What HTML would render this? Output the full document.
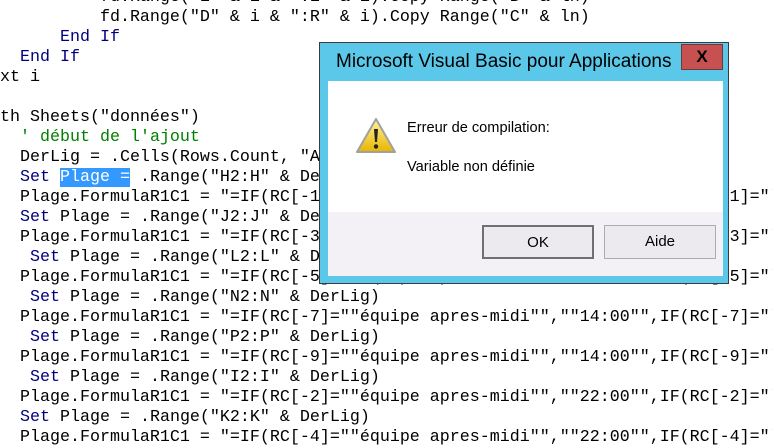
<!DOCTYPE html>
<html><head><meta charset="utf-8"><style>
*{margin:0;padding:0}
body{width:772px;height:432px;overflow:hidden;background:#fff;position:relative}
pre{position:absolute;left:0;top:-12px;font-family:"Liberation Mono",monospace;font-size:16.67px;line-height:20px;color:#000;white-space:pre}
.k{color:#00007f}.c{color:#008000}.h{background:#3399ff;color:#fff}
#dlg{position:absolute;left:319px;top:42px;width:408px;height:240px;background:#5bc8ea;border:1px solid #3c3c3c}
#title{position:absolute;left:16px;top:8px;font-family:"Liberation Sans",sans-serif;font-size:19px;color:#000}
#close{position:absolute;left:361px;top:1px;width:42px;height:26px;background:#c75050;border:1px solid #6b3a3a;box-sizing:border-box;font:bold 17px "Liberation Sans",sans-serif;text-align:center;line-height:24px;color:#000}
#white{position:absolute;left:8px;top:38px;width:395px;height:131px;background:#fff}
#gray{position:absolute;left:8px;top:169px;width:395px;height:64px;background:#f3f1f5}
.t{position:absolute;font-family:"Liberation Sans",sans-serif;font-size:14.6px;color:#000}
.b{position:absolute;top:13px;width:112px;height:34px;box-sizing:border-box;background:#eceaee;border:1px solid #acacac;font-family:"Liberation Sans",sans-serif;font-size:15px;text-align:center;line-height:32px}
</style></head><body>
<pre>          fd.Range("E" &amp; i &amp; ":E" &amp; i).Copy Range("B" &amp; ln)
          fd.Range("D" &amp; i &amp; ":R" &amp; i).Copy Range("C" &amp; ln)
      <span class="k">End If</span>
  <span class="k">End If</span>
xt i

th Sheets("données")
  <span class="c">' début de l'ajout</span>
  DerLig = .Cells(Rows.Count, "A").End(xlUp).Row
  <span class="k">Set</span> <span class="h">Plage =</span> .Range("H2:H" &amp; DerLig)
  Plage.FormulaR1C1 = "=IF(RC[-1]=""équipe apres-midi"",""14:00"",IF(RC[-1]="""
  <span class="k">Set</span> Plage = .Range("J2:J" &amp; DerLig)
  Plage.FormulaR1C1 = "=IF(RC[-3]=""équipe apres-midi"",""14:00"",IF(RC[-3]="""
   <span class="k">Set</span> Plage = .Range("L2:L" &amp; DerLig)
  Plage.FormulaR1C1 = "=IF(RC[-5]=""équipe apres-midi"",""14:00"",IF(RC[-5]="""
   <span class="k">Set</span> Plage = .Range("N2:N" &amp; DerLig)
  Plage.FormulaR1C1 = "=IF(RC[-7]=""équipe apres-midi"",""14:00"",IF(RC[-7]="""
   <span class="k">Set</span> Plage = .Range("P2:P" &amp; DerLig)
  Plage.FormulaR1C1 = "=IF(RC[-9]=""équipe apres-midi"",""14:00"",IF(RC[-9]="""
   <span class="k">Set</span> Plage = .Range("I2:I" &amp; DerLig)
  Plage.FormulaR1C1 = "=IF(RC[-2]=""équipe apres-midi"",""22:00"",IF(RC[-2]="""
  <span class="k">Set</span> Plage = .Range("K2:K" &amp; DerLig)
  Plage.FormulaR1C1 = "=IF(RC[-4]=""équipe apres-midi"",""22:00"",IF(RC[-4]="""</pre>
<div id="dlg">
 <div id="title">Microsoft Visual Basic pour Applications</div>
 <div id="close">X</div>
 <div id="white">
  <svg style="position:absolute;left:27px;top:36px" width="42" height="38" viewBox="0 0 42 38">
   <defs><linearGradient id="g" x1="0" y1="0" x2="0" y2="1"><stop offset="0" stop-color="#fff59a"/><stop offset="1" stop-color="#e8b400"/></linearGradient></defs>
   <path d="M21 2 L40 35 L2 35 Z" fill="url(#g)" stroke="#a0a0a0" stroke-width="2" stroke-linejoin="round"/>
   <path d="M19 12 h4 l-1 13 h-2 Z" fill="#222"/>
   <circle cx="21" cy="29.5" r="2.2" fill="#222"/>
  </svg>
  <div class="t" style="left:79px;top:39px">Erreur de compilation:</div>
  <div class="t" style="left:79px;top:78px">Variable non définie</div>
 </div>
 <div id="gray">
  <div class="b" style="left:154px;border:2px solid #707070">OK</div>
  <div class="b" style="left:276px">Aide</div>
 </div>
</div>
</body></html>
